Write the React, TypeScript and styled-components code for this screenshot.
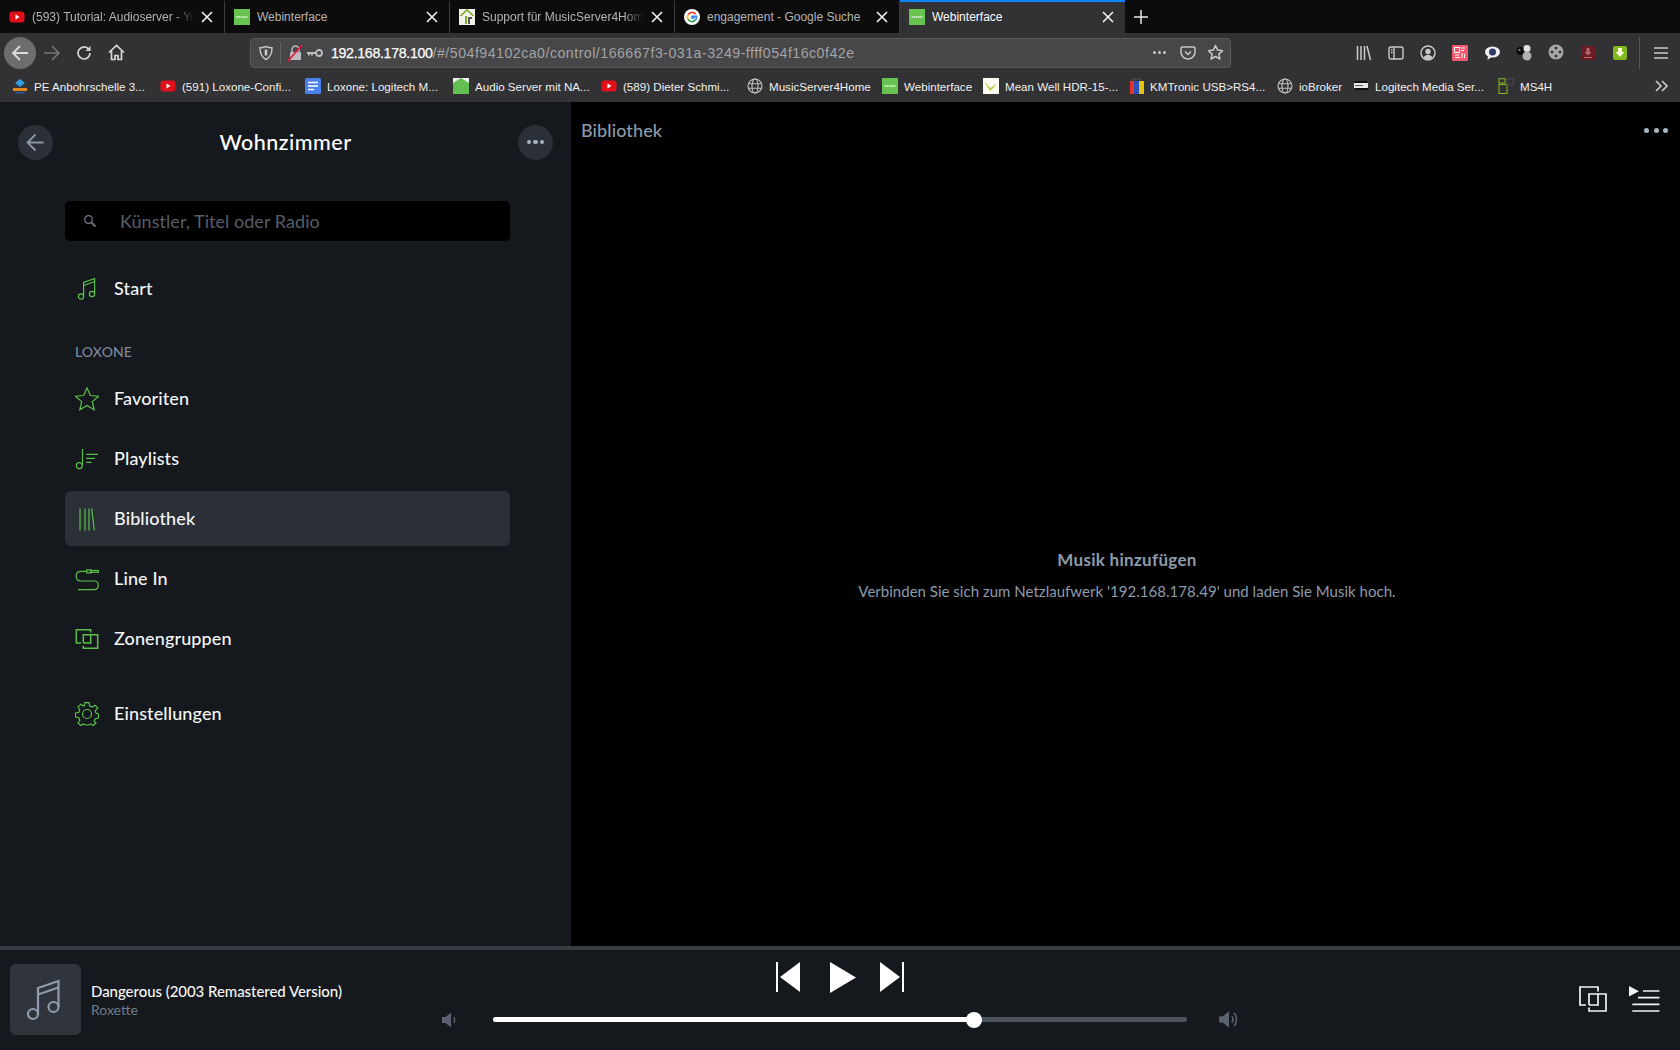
import React from "react";
import styled, { createGlobalStyle } from "styled-components";

const Global = createGlobalStyle`
  html, body { margin: 0; padding: 0; background: #000; }
  #root { height: 1050px; }
  * { box-sizing: border-box; }
`;

const UI = `"Lato", "Open Sans", sans-serif`;
const SYS = `"Liberation Sans", Arial, sans-serif`;
const GREEN = "#5cc04a";

const Page = styled.div`
  width: 1680px;
  height: 1050px;
  display: flex;
  flex-direction: column;
  overflow: hidden;
  background: #000;
`;

/* ---------- browser chrome ---------- */
const TabStrip = styled.div`
  height: 33px;
  display: flex;
  align-items: stretch;
  background: #0c0c0d;
  flex: none;
`;
const Tab = styled.div<{ $active?: boolean }>`
  width: 225px;
  display: flex;
  align-items: center;
  padding: 0 11px 2px 9px;
  gap: 7px;
  font: 12px ${SYS};
  color: ${(p) => (p.$active ? "#fbfbfb" : "#b4b4b6")};
  background: ${(p) => (p.$active ? "#323234" : "transparent")};
  border-right: ${(p) => (p.$active ? "0" : "1px solid #3c3c3e")};
  border-top: 2px solid ${(p) => (p.$active ? "#0a84ff" : "transparent")};
`;
const TabLabel = styled.span<{ $fade?: boolean }>`
  flex: 1;
  white-space: nowrap;
  overflow: hidden;
  ${(p) => (p.$fade ? "mask-image: linear-gradient(to right, #000 88%, transparent 100%);" : "")}
`;
const NewTab = styled.div`
  width: 32px;
  display: flex;
  align-items: center;
  justify-content: center;
  color: #e8e8e8;
`;
const Toolbar = styled.div`
  height: 39px;
  flex: none;
  background: #323234;
  display: flex;
  align-items: center;
  padding-left: 4px;
`;
const NavButton = styled.div<{ $round?: boolean; $dim?: boolean }>`
  width: 32px;
  height: 32px;
  border-radius: 50%;
  background: ${(p) => (p.$round ? "#6d6d6f" : "transparent")};
  color: ${(p) => (p.$dim ? "#77777a" : "#d6d6d8")};
  display: flex;
  align-items: center;
  justify-content: center;
`;
const UrlBar = styled.div`
  margin-left: 118px;
  width: 981px;
  height: 30px;
  background: #474749;
  border: 1px solid #5a5a5c;
  border-radius: 4px;
  display: flex;
  align-items: center;
  padding: 0 6px 0 7px;
  font: 14.2px ${SYS};
  color: #a0a0a2;
`;
const UrlDivider = styled.span`
  width: 1px;
  height: 22px;
  background: #606062;
  margin: 0 6px;
`;
const UrlGap = styled.span<{ $w: number }>`
  width: ${(p) => p.$w}px;
  flex: none;
`;
const UrlHost = styled.span`
  color: #fbfbfb;
  letter-spacing: -0.33px;
  -webkit-text-stroke: 0.25px #fbfbfb;
`;
const UrlPath = styled.span`
  flex: 1;
  color: #a3a3a5;
  letter-spacing: 0.48px;
`;
const UrlIcons = styled.div`
  display: flex;
  align-items: center;
  gap: 11px;
  color: #c8c8ca;
`;
const ToolIcons = styled.div`
  margin-left: 117px;
  display: flex;
  align-items: center;
  height: 100%;
  color: #c9c9cb;
`;
const ToolIcon = styled.div`
  width: 32px;
  display: flex;
  align-items: center;
  justify-content: center;
`;
const ToolDivider = styled.div`
  width: 1px;
  height: 32px;
  background: #565658;
  margin: 0 14px 0 3px;
`;
const Bookmarks = styled.div`
  height: 30px;
  flex: none;
  background: #323234;
  display: flex;
  align-items: center;
  padding: 0 0 2px 12px;
  font: 11.6px ${SYS};
  color: #f0f0f0;
`;
const Bookmark = styled.div<{ $width: number }>`
  width: ${(p) => p.$width}px;
  flex: none;
  display: flex;
  align-items: center;
  gap: 6px;
  white-space: nowrap;
  overflow: hidden;
`;
const Overflow = styled.div`
  margin-left: auto;
  margin-right: 11px;
  display: flex;
  color: #c9c9cb;
`;

/* ---------- app ---------- */
const Main = styled.div`
  flex: 1;
  display: flex;
  min-height: 0;
`;
const Sidebar = styled.aside`
  width: 571px;
  flex: none;
  background: #15191d;
  padding: 0 18px;
  display: flex;
  flex-direction: column;
`;
const SideHeader = styled.div`
  height: 80px;
  display: flex;
  align-items: center;
  justify-content: space-between;
`;
const CircleBtn = styled.div`
  width: 35px;
  height: 35px;
  border-radius: 50%;
  background: #2a2f38;
  color: #8a96a6;
  display: flex;
  align-items: center;
  justify-content: center;
`;
const RoomTitle = styled.h1`
  margin: 0;
  font: 500 21.5px ${UI};
  color: #fff;
  letter-spacing: 0.5px;
`;
const SideBody = styled.div`
  margin: 19px 43px 0 47px;
  display: flex;
  flex-direction: column;
`;
const Search = styled.div`
  height: 40px;
  background: #000;
  border-radius: 5px;
  display: flex;
  align-items: center;
  padding-left: 18px;
  gap: 23px;
  font: 18px ${UI};
  color: #565e69;
  letter-spacing: 0.05px;
  margin-bottom: 14px;
`;
const NavRow = styled.div<{ $active?: boolean }>`
  height: 55px;
  margin: 5px 0 0;
  padding-left: 10px;
  display: flex;
  align-items: center;
  gap: 15px;
  border-radius: 6px;
  background: ${(p) => (p.$active ? "#2a2f38" : "transparent")};
  font: 500 18px ${UI};
  color: #f4f5f6;
  letter-spacing: 0.12px;
`;
const NavText = styled.span`
  margin-bottom: 1px;
`;
const SectionLabel = styled.div`
  margin: 28px 0 5px 10px;
  height: 18px;
  font: 500 14px ${UI};
  color: #7a8899;
  letter-spacing: 0.1px;
`;
const Spacer = styled.div`
  height: 15px;
`;
const Content = styled.main`
  flex: 1;
  display: flex;
  flex-direction: column;
  background: #000;
  padding: 17px 12px 0 10px;
`;
const ContentHead = styled.div`
  display: flex;
  align-items: center;
  justify-content: space-between;
  font: 500 18px ${UI};
  color: #8e9bab;
  letter-spacing: 0.1px;
  height: 22px;
`;
const Dots = styled.div<{ $color: string; $size: number; $gap: number; $after?: number }>`
  display: flex;
  gap: ${(p) => p.$gap}px;
  margin-right: ${(p) => p.$after ?? 0}px;
  span {
    width: ${(p) => p.$size}px;
    height: ${(p) => p.$size}px;
    border-radius: 50%;
    background: ${(p) => p.$color};
  }
`;
const Empty = styled.div`
  margin-top: 408px;
  padding-left: 5px;
  display: flex;
  flex-direction: column;
  align-items: center;
  color: #8e9bab;
`;
const EmptyTitle = styled.div`
  font: 700 17px ${UI};
  letter-spacing: 0.3px;
  margin-bottom: 12px;
`;
const EmptyText = styled.div`
  font: 15px ${UI};
  letter-spacing: 0.02px;
`;

const Player = styled.footer`
  height: 104px;
  flex: none;
  background: #15191d;
  border-top: 4px solid #363b44;
  display: flex;
`;
const NowPlaying = styled.div`
  width: 430px;
  flex: none;
  display: flex;
  align-items: center;
  padding: 0 0 1px 10px;
  gap: 10px;
`;
const Cover = styled.div`
  width: 71px;
  height: 71px;
  background: #30353d;
  border-radius: 6px;
  display: flex;
  align-items: center;
  justify-content: center;
  color: #8e9bab;
`;
const TrackInfo = styled.div`
  margin-top: 1px;
  display: flex;
  flex-direction: column;
  gap: 1px;
`;
const TrackTitle = styled.div`
  font: 500 15px ${UI};
  color: #f5f6f7;
  letter-spacing: -0.05px;
`;
const TrackArtist = styled.div`
  font: 14px ${UI};
  color: #6f7d8d;
`;
const Center = styled.div`
  width: 820px;
  flex: none;
  display: flex;
  flex-direction: column;
`;
const Transport = styled.div`
  margin-top: 11px;
  margin-left: 346px;
  display: flex;
  align-items: center;
  height: 32px;
  gap: 30px;
  color: #fff;
`;
const PlayWrap = styled.div`
  display: flex;
  margin-right: -6px;
`;
const ProgressRow = styled.div`
  margin-top: 16px;
  display: flex;
  align-items: center;
  color: #59626e;
  padding-left: 11px;
`;
const Track = styled.div`
  width: 694px;
  height: 5px;
  margin: 0 31px 0 34px;
  background: #4a525d;
  border-radius: 3px;
  position: relative;
`;
const Fill = styled.div`
  height: 100%;
  background: #fff;
  border-radius: 3px;
`;
const Knob = styled.div`
  position: absolute;
  top: -5.5px;
  width: 16px;
  height: 16px;
  margin-left: -8px;
  border-radius: 50%;
  background: #fff;
`;
const PlayerRight = styled.div`
  flex: 1;
  display: flex;
  align-items: center;
  justify-content: flex-end;
  gap: 22px;
  padding: 0 20px 2px 0;
  color: #f2f2f2;
`;

/* ---------- icons ---------- */
const Close = () => (
  <svg width="12" height="12" viewBox="0 0 12 12" fill="none" stroke="#f2f2f2" strokeWidth="1.6" style={{ flex: "none" }}>
    <path d="M1 1l10 10M11 1L1 11" />
  </svg>
);
const Yt = () => (
  <svg width="16" height="16" viewBox="0 0 16 16" style={{ flex: "none" }}>
    <rect x="0.5" y="2.5" width="15" height="11" rx="3" fill="#e3101a" />
    <path d="M6.5 5.6v4.8L10.5 8z" fill="#fff" />
  </svg>
);
const Lox = () => (
  <svg width="16" height="16" viewBox="0 0 16 16" style={{ flex: "none" }}>
    <rect width="16" height="16" fill="#69c350" />
    <path d="M2.5 8h11" stroke="#e8f6e2" strokeWidth="1.6" strokeDasharray="1.6 0.5" />
  </svg>
);
const Support = () => (
  <svg width="16" height="16" viewBox="0 0 16 16" style={{ flex: "none" }}>
    <rect width="16" height="16" fill="#f2f2ea" />
    <path d="M1.5 7L8 1l6.5 6" fill="none" stroke="#84a82f" strokeWidth="1.7" />
    <path d="M6 15V7h2v8z" fill="#84a82f" />
    <path d="M9 8h4v2H11v5H9z" fill="#555" />
  </svg>
);
const Google = () => (
  <svg width="16" height="16" viewBox="0 0 16 16" style={{ flex: "none" }}>
    <circle cx="8" cy="8" r="8" fill="#fff" />
    <path d="M11.7 5.2A4.6 4.6 0 0 0 4.1 5.6" fill="none" stroke="#ea4335" strokeWidth="1.8" />
    <path d="M4.1 5.6a4.6 4.6 0 0 0 0 4.8" fill="none" stroke="#fbbc05" strokeWidth="1.8" />
    <path d="M4.1 10.4a4.6 4.6 0 0 0 7.2.8" fill="none" stroke="#34a853" strokeWidth="1.8" />
    <path d="M11.3 11.2A4.6 4.6 0 0 0 12.6 7.4H8v1.6h2.8" fill="none" stroke="#4285f4" strokeWidth="1.7" />
  </svg>
);
const Globe = () => (
  <svg width="16" height="16" viewBox="0 0 16 16" fill="none" stroke="#c4c4c6" strokeWidth="1.1" style={{ flex: "none" }}>
    <circle cx="8" cy="8" r="7" />
    <ellipse cx="8" cy="8" rx="3" ry="7" />
    <path d="M1.3 5.7h13.4M1.3 10.3h13.4" />
  </svg>
);
const Bst = () => (
  <svg width="16" height="16" viewBox="0 0 16 16" style={{ flex: "none" }}>
    <path d="M8 1l5 4-5 4-5-4z" fill="#2f9fe0" />
    <rect x="1" y="10" width="14" height="3" fill="#e08a1e" />
    <rect x="3" y="14" width="10" height="1.5" fill="#2a55a8" />
  </svg>
);
const Docs = () => (
  <svg width="16" height="16" viewBox="0 0 16 16" style={{ flex: "none" }}>
    <rect width="16" height="16" rx="1.5" fill="#4a80ec" />
    <path d="M3 4.5h10M3 8h10M3 11.5h6" stroke="#fff" strokeWidth="1.5" />
  </svg>
);
const AudioFav = () => (
  <svg width="16" height="16" viewBox="0 0 16 16" style={{ flex: "none" }}>
    <rect width="16" height="16" fill="#62bf53" />
    <path d="M0 5L8 0l8 5V0H0z" fill="#f2f2f2" />
  </svg>
);
const MeanWell = () => (
  <svg width="16" height="16" viewBox="0 0 16 16" style={{ flex: "none" }}>
    <rect width="16" height="16" fill="#fbfbf4" />
    <path d="M2 4c1.5 4 3.5 7 5.5 9C9.500 11 12 8 14 5c-2.500 2-5 4-6.500 5C6 9 4 6 2 4z" fill="#bccb3c" />
  </svg>
);
const Km = () => (
  <svg width="14" height="16" viewBox="0 0 14 16" style={{ flex: "none" }}>
    <rect y="3" width="4" height="13" fill="#e0332e" />
    <rect x="4" y="3" width="5" height="13" fill="#2b50b8" />
    <rect x="9" y="3" width="5" height="13" fill="#e5c21a" />
    <path d="M3 3V1h8v2" stroke="#555" fill="none" />
  </svg>
);
const LogiDev = () => (
  <svg width="16" height="16" viewBox="0 0 16 16" style={{ flex: "none" }}>
    <path d="M2 3h12l1 2H1z" fill="#111" />
    <rect x="1" y="5" width="14" height="5" fill="#e8e8e8" />
    <rect x="2" y="7" width="8" height="1" fill="#555" />
    <rect x="2" y="10" width="13" height="2" fill="#111" />
  </svg>
);
const Ms4h = () => (
  <svg width="16" height="16" viewBox="0 0 16 16" fill="none" style={{ flex: "none" }}>
    <rect x="1" y="0.700" width="6" height="4.300" stroke="#88b81e" />
    <rect x="1" y="6.500" width="8" height="9" stroke="#88b81e" />
    <rect x="9" y="1" width="6" height="6" stroke="#4c4c4e" />
  </svg>
);
const Shield = () => (
  <svg width="16" height="16" viewBox="0 0 16 16" fill="none" stroke="#c8c8ca" strokeWidth="1.400">
    <path d="M8 1.500c2 .9 4 1.300 6 1.300 0 5.500-1.500 9.500-6 11.700C3.500 12.300 2 8.300 2 2.800c2 0 4-.4 6-1.300z" />
    <path d="M8 4.500v6" strokeWidth="2.600" />
  </svg>
);
const LockSlash = () => (
  <svg width="16" height="18" viewBox="0 0 16 18" fill="none">
    <rect x="3" y="8" width="11" height="8" rx="1" fill="#bdbdbf" />
    <path d="M5 8V5.500a3.500 3.500 0 0 1 7 0V8" stroke="#bdbdbf" strokeWidth="1.500" />
    <path d="M1 17L15 1" stroke="#f0123f" strokeWidth="1.600" />
  </svg>
);
const KeyIcon = () => (
  <svg width="18" height="10" viewBox="0 0 18 10" fill="none" stroke="#bdbdbf">
    <circle cx="13" cy="5" r="3" strokeWidth="1.800" />
    <path d="M10 5H1M3 5v2.500M6 5v2.500" strokeWidth="1.800" />
  </svg>
);
const Pocket = () => (
  <svg width="16" height="16" viewBox="0 0 16 16" fill="none" stroke="#c8c8ca" strokeWidth="1.500">
    <path d="M2.500 2h11A1.500 1.500 0 0 1 15 3.500V7a7 7 0 0 1-14 0V3.500A1.500 1.500 0 0 1 2.500 2z" />
    <path d="M5 6.500l3 3 3-3" />
  </svg>
);
const StarSmall = () => (
  <svg width="17" height="17" viewBox="0 0 17 17" fill="none" stroke="#c8c8ca" strokeWidth="1.500" strokeLinejoin="round">
    <path d="M8.500 1.500l2.100 4.600 5 .6-3.700 3.400 1 4.900-4.400-2.500-4.400 2.500 1-4.900L1.400 6.700l5-.6z" />
  </svg>
);
const Library = () => (
  <svg width="16" height="16" viewBox="0 0 16 16" stroke="currentColor" strokeWidth="1.500" fill="none">
    <path d="M1.500 1v14M5 1v14M8.500 1v14M11 1l3.500 14" />
  </svg>
);
const SidebarIcon = () => (
  <svg width="16" height="16" viewBox="0 0 16 16" stroke="currentColor" strokeWidth="1.400" fill="none">
    <rect x="1" y="2" width="14" height="12" rx="2" />
    <path d="M6 2v12" />
    <path d="M3 5h1.500M3 7.500h1.500" />
  </svg>
);
const Account = () => (
  <svg width="16" height="16" viewBox="0 0 16 16" style={{ color: "#c9c9cb" }}>
    <circle cx="8" cy="8" r="7" fill="none" stroke="currentColor" strokeWidth="1.500" />
    <circle cx="8" cy="6.500" r="2.700" fill="currentColor" />
    <path d="M3.500 12.500c1-2 3-2.800 4.500-2.800s3.500.8 4.500 2.800C11 14.500 5 14.500 3.500 12.500z" fill="currentColor" />
  </svg>
);
const QrIcon = () => (
  <svg width="16" height="16" viewBox="0 0 16 16">
    <rect width="16" height="16" rx="1" fill="#f2586e" />
    <rect x="2.500" y="2.500" width="5" height="5" fill="none" stroke="#fff" />
    <path d="M9 3h4M9 5.500h3M3 10h4M3 12.500h5M10 8v5M12.500 9v4" stroke="#fff" />
  </svg>
);
const Bubble = () => (
  <svg width="17" height="16" viewBox="0 0 17 16">
    <ellipse cx="8.500" cy="7" rx="7.500" ry="5.500" fill="#f0f0f0" />
    <path d="M4 11l-.5 4 4-3z" fill="#f0f0f0" />
    <circle cx="8.500" cy="7" r="3.500" fill="#2d3a68" />
  </svg>
);
const Balls = () => (
  <svg width="17" height="17" viewBox="0 0 17 17">
    <circle cx="4.500" cy="7" r="4" fill="#0c0c0c" />
    <circle cx="3.500" cy="6" r="1" fill="#9a9a9a" />
    <circle cx="11" cy="4.500" r="3.500" fill="#e2e2e2" />
    <circle cx="11" cy="12" r="4.500" fill="#b0b0b0" />
  </svg>
);
const Film = () => (
  <svg width="17" height="17" viewBox="0 0 17 17">
    <circle cx="8" cy="8" r="7.500" fill="#a8a8a8" />
    <circle cx="8" cy="4" r="1.600" fill="#3a3a3a" />
    <circle cx="8" cy="12" r="1.600" fill="#3a3a3a" />
    <circle cx="4" cy="8" r="1.600" fill="#3a3a3a" />
    <circle cx="12" cy="8" r="1.600" fill="#3a3a3a" />
  </svg>
);
const DlRed = () => (
  <svg width="14" height="14" viewBox="0 0 14 14">
    <rect width="14" height="14" rx="1" fill="#6b1c24" />
    <path d="M5.500 2h3v4h2l-3.500 3.500L3.500 6h2zM3 11h8v1H3z" fill="#b26a6f" />
  </svg>
);
const DlGreen = () => (
  <svg width="14" height="14" viewBox="0 0 14 14">
    <rect width="14" height="14" rx="2" fill="#83b81a" />
    <path d="M5 2h4v4h2.500L7 11 2.500 6H5z" fill="#f4f8d8" />
  </svg>
);

const Ico = ({ children }: { children: React.ReactNode }) => (
  <svg width="24" height="24" viewBox="0 0 24 24" fill="none" stroke={GREEN} strokeWidth="1.200" style={{ flex: "none" }}>
    {children}
  </svg>
);
const IStart = () => (
  <Ico>
    <circle cx="6" cy="20.500" r="2.600" />
    <circle cx="17" cy="18" r="2.600" />
    <path d="M8.600 20.500V6.500L19.600 2.500V18M8.600 9.500l11-4" />
  </Ico>
);
const IStar = () => (
  <Ico>
    <path d="M12 .8l3.300 7.700 8.300.7-6.300 5.400 1.900 8.200L12 18.500 4.800 22.800l1.900-8.200L.4 9.200l8.300-.7z" />
  </Ico>
);
const IPlaylist = () => (
  <Ico>
    <circle cx="4.300" cy="18.700" r="3" />
    <path d="M7.500 18.700V2M11.300 7.300H23M11.300 11.300H20M11.300 15.300H16.700" />
  </Ico>
);
const ILibrary = () => (
  <Ico>
    <path d="M5 1.400v22M10 1.400v22M14 1.400v22M16.700 1.400l2.600 22" />
  </Ico>
);
const ILine = () => (
  <Ico>
    <path d="M11.700 4.400H6C3 4.400 1.200 6 1.200 9c0 3.500 2.300 5 4.800 5h13c3 0 4.300 1.500 4.300 4 0 3-1.800 4.700-4.300 4.700H3" />
    <rect x="11.700" y="2.900" width="4.300" height="3" />
    <rect x="16" y="3.500" width="7.500" height="1.800" />
  </Ico>
);
const IZones = () => (
  <Ico>
    <path d="M15.700 5.500V2.700H1.300V16H6" strokeWidth="1.500" />
    <path d="M8.300 16V7.700H15.700V16H8.300" strokeWidth="1.500" />
    <path d="M15.700 7.700H22.700V21.300H8.300V18.700" strokeWidth="1.500" />
  </Ico>
);
const IGear = () => (
  <Ico>
    <circle cx="12" cy="12" r="4.500" />
    <path d="M10 .7h4l.7 3.300 2.500 1 2.800-1.800 2.800 2.800L20.200 8.800l1 2.500 2.300.700v4l-3.300.7-1 2.500L21 21 18.200 23.500l-2.500-1.500-2.200 1h-3l-2.200-1-2.500 1.500L3 21l1.800-2.800-1-2.500L.5 15v-4l3.300-.7 1-2.500L3 5 5.800 2.200l2.800 1.800 .7-.3z" />
  </Ico>
);
const SearchIcon = () => (
  <svg width="14" height="14" viewBox="0 0 14 14" fill="none" stroke="#6e7783" strokeWidth="1.300" style={{ flex: "none" }}>
    <circle cx="5.500" cy="5.500" r="3.800" />
    <path d="M8.500 8.500l4 4" strokeWidth="1.800" />
  </svg>
);
const BackArrow = () => (
  <svg width="19" height="19" viewBox="0 0 19 19" fill="none" stroke="currentColor" strokeWidth="1.800">
    <path d="M17.500 9.500H2M9.500 1.500l-8 8 8 8" />
  </svg>
);
const MusicBig = () => (
  <svg width="37" height="42" viewBox="0 0 37 42" fill="none" stroke="currentColor" strokeWidth="2.200">
    <circle cx="6" cy="35" r="5" />
    <circle cx="26.500" cy="28" r="5" />
    <path d="M11 35V9L31.500 2v26M11 15.500L31.500 8.500" />
  </svg>
);
const Prev = () => (
  <svg width="24" height="30" viewBox="0 0 24 30" fill="currentColor">
    <rect x="0" y="0" width="2" height="30" />
    <path d="M24 0v30L4 15z" />
  </svg>
);
const Play = () => (
  <svg width="26" height="31" viewBox="0 0 26 31" fill="currentColor">
    <path d="M0 0l26 15.500L0 31z" />
  </svg>
);
const Next = () => (
  <svg width="24" height="30" viewBox="0 0 24 30" fill="currentColor">
    <rect x="22" y="0" width="2" height="30" />
    <path d="M0 0v30l20-15z" />
  </svg>
);
const VolLow = () => (
  <svg width="18" height="20" viewBox="0 0 18 18" fill="currentColor" style={{ flex: "none" }}>
    <path d="M1 6h3.500L10 1.500v15L4.500 12H1z" />
    <path d="M12.500 6c1.500 1.500 1.500 4.500 0 6" fill="none" stroke="currentColor" strokeWidth="1.400" />
  </svg>
);
const VolHigh = () => (
  <svg width="22" height="21" viewBox="0 0 20 18" fill="currentColor" style={{ flex: "none" }}>
    <path d="M1 6h3.500L10 1.500v15L4.500 12H1z" />
    <path d="M12.500 6c1.500 1.500 1.500 4.500 0 6M14.500 3c3 3 3 9 0 12" fill="none" stroke="currentColor" strokeWidth="1.400" />
  </svg>
);
const GroupIcon = () => (
  <svg width="28" height="26" viewBox="0 0 28 26" fill="none" stroke="currentColor" strokeWidth="1.700">
    <path d="M19 5.500V1H1V19H7" />
    <path d="M10 19V8H19V19H10" />
    <path d="M19 8H27V25H10V21.500" />
  </svg>
);
const QueueIcon = () => (
  <svg width="31" height="27" viewBox="0 0 31 27" fill="none" stroke="currentColor" strokeWidth="1.700">
    <path d="M0 0l10 5.200L0 10.400z" fill="currentColor" stroke="none" />
    <path d="M14 5h16.500M9 11.700h21.500M3.300 18.300h27.200M3.300 25h27.200" />
  </svg>
);

type BM = { w: number; icon: React.ReactNode; label: string };
const bookmarks: BM[] = [
  { w: 148, icon: <Bst />, label: "PE Anbohrschelle 3..." },
  { w: 145, icon: <Yt />, label: "(591) Loxone-Confi..." },
  { w: 148, icon: <Docs />, label: "Loxone: Logitech M..." },
  { w: 148, icon: <AudioFav />, label: "Audio Server mit NA..." },
  { w: 146, icon: <Yt />, label: "(589) Dieter Schmi..." },
  { w: 135, icon: <Globe />, label: "MusicServer4Home" },
  { w: 101, icon: <Lox />, label: "Webinterface" },
  { w: 147, icon: <MeanWell />, label: "Mean Well HDR-15-..." },
  { w: 147, icon: <Km />, label: "KMTronic USB>RS4..." },
  { w: 76, icon: <Globe />, label: "ioBroker" },
  { w: 145, icon: <LogiDev />, label: "Logitech Media Ser..." },
  { w: 60, icon: <Ms4h />, label: "MS4H" },
];

const tabs: { icon: React.ReactNode; label: string; fade?: boolean; active?: boolean }[] = [
  { icon: <Yt />, label: "(593) Tutorial: Audioserver - YouTube", fade: true },
  { icon: <Lox />, label: "Webinterface" },
  { icon: <Support />, label: "Support für MusicServer4Home", fade: true },
  { icon: <Google />, label: "engagement - Google Suche" },
  { icon: <Lox />, label: "Webinterface", active: true },
];

const navTop = [{ icon: <IStart />, label: "Start" }];
const navLox = [
  { icon: <IStar />, label: "Favoriten" },
  { icon: <IPlaylist />, label: "Playlists" },
  { icon: <ILibrary />, label: "Bibliothek", active: true },
  { icon: <ILine />, label: "Line In" },
  { icon: <IZones />, label: "Zonengruppen" },
];

export default function App() {
  const progress = 0.693;
  return (
    <Page>
      <Global />
      <TabStrip>
        {tabs.map((t, i) => (
          <Tab key={i} $active={t.active}>
            {t.icon}
            <TabLabel $fade={t.fade}>{t.label}</TabLabel>
            <Close />
          </Tab>
        ))}
        <NewTab>
          <svg width="14" height="14" viewBox="0 0 14 14" stroke="currentColor" strokeWidth="1.500">
            <path d="M7 0v14M0 7h14" />
          </svg>
        </NewTab>
      </TabStrip>
      <Toolbar>
        <NavButton $round>
          <svg width="18" height="18" viewBox="0 0 18 18" fill="none" stroke="#dcdcdc" strokeWidth="1.800">
            <path d="M17 9H2M9 2L2 9l7 7" />
          </svg>
        </NavButton>
        <NavButton $dim>
          <svg width="18" height="18" viewBox="0 0 18 18" fill="none" stroke="currentColor" strokeWidth="1.600">
            <path d="M1 9h15M9 2l7 7-7 7" />
          </svg>
        </NavButton>
        <NavButton>
          <svg width="16" height="16" viewBox="0 0 16 16" fill="none" stroke="currentColor" strokeWidth="1.700">
            <path d="M14 8a6 6 0 1 1-2-4.500L14 5" />
            <path d="M14.500 1v5h-5" fill="currentColor" stroke="none" />
          </svg>
        </NavButton>
        <NavButton>
          <svg width="17" height="17" viewBox="0 0 17 17" fill="none" stroke="currentColor" strokeWidth="1.700">
            <path d="M1 8.500L8.500 1.500 16 8.500M3.500 7v8.500h3.500v-4h3v4h3.500V7" />
          </svg>
        </NavButton>
        <UrlBar>
          <Shield />
          <UrlDivider />
          <LockSlash />
          <UrlGap $w={3} />
          <KeyIcon />
          <UrlGap $w={7} />
          <UrlHost>192.168.178.100</UrlHost>
          <UrlPath>/#/504f94102ca0/control/166667f3-031a-3249-ffff054f16c0f42e</UrlPath>
          <UrlIcons>
            <Dots $color="#c8c8ca" $size={3.5} $gap={1.500} $after={3}>
              <span />
              <span />
              <span />
            </Dots>
            <Pocket />
            <StarSmall />
          </UrlIcons>
        </UrlBar>
        <ToolIcons>
          <ToolIcon><Library /></ToolIcon>
          <ToolIcon><SidebarIcon /></ToolIcon>
          <ToolIcon><Account /></ToolIcon>
          <ToolIcon><QrIcon /></ToolIcon>
          <ToolIcon><Bubble /></ToolIcon>
          <ToolIcon><Balls /></ToolIcon>
          <ToolIcon><Film /></ToolIcon>
          <ToolIcon><DlRed /></ToolIcon>
          <ToolIcon><DlGreen /></ToolIcon>
          <ToolDivider />
          <svg width="14" height="12" viewBox="0 0 14 12" stroke="currentColor" strokeWidth="1.600">
            <path d="M0 1h14M0 6h14M0 11h14" />
          </svg>
        </ToolIcons>
      </Toolbar>
      <Bookmarks>
        {bookmarks.map((b, i) => (
          <Bookmark key={i} $width={b.w}>
            {b.icon}
            <span>{b.label}</span>
          </Bookmark>
        ))}
        <Overflow>
          <svg width="14" height="12" viewBox="0 0 14 12" fill="none" stroke="currentColor" strokeWidth="1.700">
            <path d="M1 1l5 5-5 5M7 1l5 5-5 5" />
          </svg>
        </Overflow>
      </Bookmarks>
      <Main>
        <Sidebar>
          <SideHeader>
            <CircleBtn>
              <BackArrow />
            </CircleBtn>
            <RoomTitle>Wohnzimmer</RoomTitle>
            <CircleBtn>
              <Dots $color="#a7b1be" $size={4.500} $gap={2}>
                <span />
                <span />
                <span />
              </Dots>
            </CircleBtn>
          </SideHeader>
          <SideBody>
            <Search>
              <SearchIcon />
              <span>Künstler, Titel oder Radio</span>
            </Search>
            {navTop.map((n) => (
              <NavRow key={n.label}>
                {n.icon}
                {n.label}
              </NavRow>
            ))}
            <SectionLabel>LOXONE</SectionLabel>
            {navLox.map((n) => (
              <NavRow key={n.label} $active={n.active}>
                {n.icon}
                <NavText>{n.label}</NavText>
              </NavRow>
            ))}
            <Spacer />
            <NavRow>
              <IGear />
              <NavText>Einstellungen</NavText>
            </NavRow>
          </SideBody>
        </Sidebar>
        <Content>
          <ContentHead>
            Bibliothek
            <Dots $color="#aab4c0" $size={5} $gap={4.500}>
              <span />
              <span />
              <span />
            </Dots>
          </ContentHead>
          <Empty>
            <EmptyTitle>Musik hinzufügen</EmptyTitle>
            <EmptyText>Verbinden Sie sich zum Netzlaufwerk '192.168.178.49' und laden Sie Musik hoch.</EmptyText>
          </Empty>
        </Content>
      </Main>
      <Player>
        <NowPlaying>
          <Cover>
            <MusicBig />
          </Cover>
          <TrackInfo>
            <TrackTitle>Dangerous (2003 Remastered Version)</TrackTitle>
            <TrackArtist>Roxette</TrackArtist>
          </TrackInfo>
        </NowPlaying>
        <Center>
          <Transport>
            <Prev />
            <PlayWrap>
              <Play />
            </PlayWrap>
            <Next />
          </Transport>
          <ProgressRow>
            <VolLow />
            <Track>
              <Fill style={{ width: `${progress * 100}%` }} />
              <Knob style={{ left: `${progress * 100}%` }} />
            </Track>
            <VolHigh />
          </ProgressRow>
        </Center>
        <PlayerRight>
          <GroupIcon />
          <QueueIcon />
        </PlayerRight>
      </Player>
    </Page>
  );
}
